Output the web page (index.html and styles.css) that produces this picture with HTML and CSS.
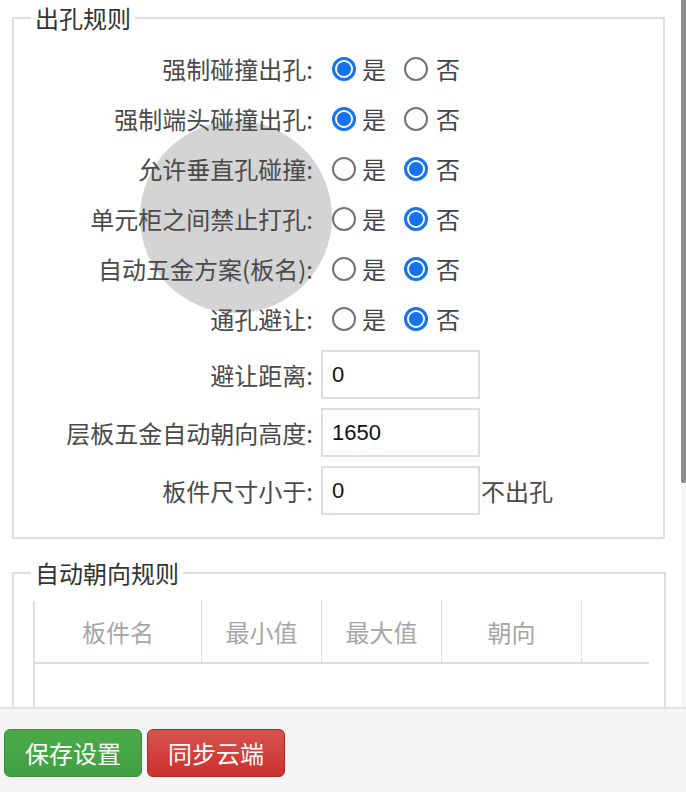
FILE: index.html
```html
<!DOCTYPE html>
<html lang="zh-CN">
<head>
<meta charset="utf-8">
<title>出孔规则</title>
<link rel="stylesheet" href="styles.css">
</head>
<body>
<div class="app">
  <div class="main">
    <div class="ripple"></div>
    <fieldset class="box">
      <legend>出孔规则</legend>
      <div class="form">
        <div class="row">
          <span class="lbl">强制碰撞出孔:</span>
          <span class="ctrl"><input type="radio" name="r1" checked><span class="opt">是</span><input type="radio" name="r1"><span class="opt2">否</span></span>
        </div>
        <div class="row">
          <span class="lbl">强制端头碰撞出孔:</span>
          <span class="ctrl"><input type="radio" name="r2" checked><span class="opt">是</span><input type="radio" name="r2"><span class="opt2">否</span></span>
        </div>
        <div class="row">
          <span class="lbl">允许垂直孔碰撞:</span>
          <span class="ctrl"><input type="radio" name="r3"><span class="opt">是</span><input type="radio" name="r3" checked><span class="opt2">否</span></span>
        </div>
        <div class="row">
          <span class="lbl">单元柜之间禁止打孔:</span>
          <span class="ctrl"><input type="radio" name="r4"><span class="opt">是</span><input type="radio" name="r4" checked><span class="opt2">否</span></span>
        </div>
        <div class="row">
          <span class="lbl">自动五金方案(板名):</span>
          <span class="ctrl"><input type="radio" name="r5"><span class="opt">是</span><input type="radio" name="r5" checked><span class="opt2">否</span></span>
        </div>
        <div class="row">
          <span class="lbl">通孔避让:</span>
          <span class="ctrl"><input type="radio" name="r6"><span class="opt">是</span><input type="radio" name="r6" checked><span class="opt2">否</span></span>
        </div>
        <div class="row irow">
          <span class="lbl">避让距离:</span>
          <span class="ctrl"><input class="txt" type="text" value="0"></span>
        </div>
        <div class="row irow">
          <span class="lbl">层板五金自动朝向高度:</span>
          <span class="ctrl"><input class="txt" type="text" value="1650"></span>
        </div>
        <div class="row irow">
          <span class="lbl">板件尺寸小于:</span>
          <span class="ctrl"><input class="txt" type="text" value="0"><span class="suffix">不出孔</span></span>
        </div>
      </div>
    </fieldset>
    <fieldset class="box box2">
      <legend>自动朝向规则</legend>
      <div class="table">
        <div class="thead">
          <div class="th">板件名</div>
          <div class="th">最小值</div>
          <div class="th">最大值</div>
          <div class="th">朝向</div>
          <div class="th last"></div>
        </div>
        <div class="tbody"></div>
      </div>
    </fieldset>
    <div class="scrollbar"><div class="thumb"></div></div>
  </div>
  <div class="footer">
    <button class="btn btn-green">保存设置</button>
    <button class="btn btn-red">同步云端</button>
  </div>
</div>
</body>
</html>
```
FILE: styles.css
```css
html, body {
  margin: 0;
  padding: 0;
  background: #ffffff;
}
body {
  font-family: "Noto Sans CJK SC", "Noto Sans", sans-serif;
  color: #4a4a4a;
}
.app {
  width: 686px;
  height: 792px;
  display: flex;
  flex-direction: column;
  overflow: hidden;
}
.main {
  position: relative;
  height: 707px;
  overflow: hidden;
  flex: none;
}
.ripple {
  position: absolute;
  left: 140px;
  top: 121px;
  width: 192px;
  height: 192px;
  border-radius: 50%;
  background: #d4d4d4;
  z-index: 0;
}
.box {
  position: relative;
  z-index: 1;
  margin: 0 21px 0 12px;
  padding: 8px 0 19px 0;
  border: 2px solid #dedede;
  min-width: 0;
}
.box legend {
  margin-left: 17px;
  padding: 0 4px;
  font-size: 24px;
  line-height: 36px;
  color: #333333;
}
.box2 {
  margin-top: 16px;
  margin-right: 20px;
  padding-top: 10px;
  padding-bottom: 0;
  height: 400px;
}
.form {
  display: flex;
  flex-direction: column;
}
.row {
  display: grid;
  grid-template-columns: 302px 1fr;
  align-items: center;
  height: 50px;
}
.irow {
  height: 49px;
  padding: 6px 0 3px 0;
}
.lbl {
  text-align: right;
  padding-right: 3px;
  font-size: 24px;
  line-height: 30px;
  color: #4a4a4a;
  white-space: nowrap;
}
.ctrl {
  display: flex;
  align-items: center;
  font-size: 24px;
  line-height: 30px;
  color: #444444;
}
.ctrl input[type="radio"] {
  appearance: none;
  -webkit-appearance: none;
  width: 24px;
  height: 24px;
  margin: 0;
  border: 2px solid #737373;
  border-radius: 50%;
  background: #ffffff;
  box-sizing: border-box;
  flex: none;
}
.ctrl input[type="radio"]:first-child {
  margin-left: 16px;
}
.ctrl input[type="radio"]:checked {
  border: 3px solid #1672ee;
  background: radial-gradient(circle, #1672ee 0 6.5px, #ffffff 7.5px);
}
.opt {
  margin-left: 6px;
  margin-right: 18px;
}
.opt2 {
  margin-left: 8px;
}
.txt {
  margin: 0 0 0 5px;
  width: 159px;
  height: 49px;
  box-sizing: border-box;
  border: 2px solid #dddddd;
  padding: 0 0 0 9px;
  font-family: "Liberation Sans", Arial, sans-serif;
  font-size: 22px;
  color: #111111;
  outline: none;
  background: #ffffff;
}
.suffix {
  margin-left: 1px;
  color: #4a4a4a;
}
.table {
  margin-left: 19px;
  width: 614px;
  border-left: 2px solid #dddddd;
}
.thead {
  display: grid;
  grid-template-columns: 167px 120px 120px 140px 1fr;
  height: 61px;
  border-bottom: 2px solid #dddddd;
}
.th {
  display: flex;
  align-items: center;
  justify-content: center;
  font-size: 24px;
  color: #a6a6a6;
  border-right: 1px dotted #c8c8c8;
}
.th.last {
  border-right: none;
}
.tbody {
  height: 300px;
}
.scrollbar {
  position: absolute;
  top: 0;
  right: 0;
  width: 5px;
  height: 100%;
  background: #f6f6f6;
  z-index: 2;
}
.thumb {
  height: 483px;
  background: #8d8d8d;
  border-radius: 0 0 2px 2px;
}
.footer {
  flex: none;
  border-top: 2px solid #e3e3e3;
  background: #f5f5f5;
  display: flex;
  align-items: flex-start;
  gap: 5px;
  padding: 20px 0 0 4px;
  box-sizing: border-box;
  height: 85px;
}
.btn {
  width: 138px;
  height: 48px;
  border-radius: 6px;
  font-family: "Noto Sans CJK SC", sans-serif;
  font-size: 24px;
  line-height: 1;
  color: #ffffff;
  padding: 0;
  cursor: pointer;
}
.btn-green {
  background: linear-gradient(#4bab4b, #41a041);
  border: 1px solid #3a8e3a;
}
.btn-red {
  background: linear-gradient(#d9534f, #c9302c);
  border: 1px solid #ac2925;
}
```
